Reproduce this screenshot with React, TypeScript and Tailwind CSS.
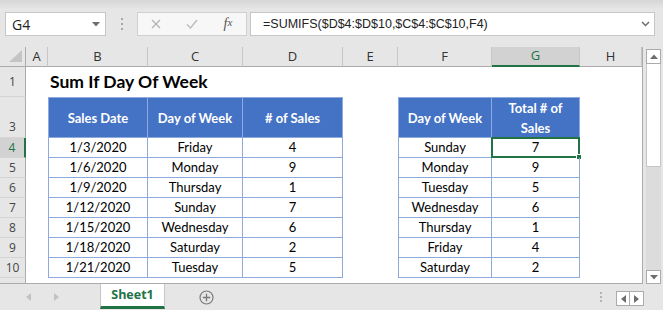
import clsx from "clsx";
import type { ReactNode } from "react";

const W = {
  A: "w-[22px]",
  B: "w-[100px]",
  C: "w-[95px]",
  D: "w-[100px]",
  E: "w-[55px]",
  F: "w-[94px]",
  G: "w-[88px]",
  H: "w-[62px]",
};

const sales = [
  ["1/3/2020", "Friday", "4"],
  ["1/6/2020", "Monday", "9"],
  ["1/9/2020", "Thursday", "1"],
  ["1/12/2020", "Sunday", "7"],
  ["1/15/2020", "Wednesday", "6"],
  ["1/18/2020", "Saturday", "2"],
  ["1/21/2020", "Tuesday", "5"],
];

const totals = [
  ["Sunday", "7"],
  ["Monday", "9"],
  ["Tuesday", "5"],
  ["Wednesday", "6"],
  ["Thursday", "1"],
  ["Friday", "4"],
  ["Saturday", "2"],
];

function RowHead({ n, active, bottom }: { n?: string; active?: boolean; bottom?: boolean }) {
  return (
    <div
      className={clsx(
        "w-[26px] shrink-0 flex justify-center border-b border-b-[#d4d4d4] text-[12px] font-['Open_Sans',sans-serif]",
        bottom ? "items-end pb-[1px]" : "items-center",
        active
          ? "bg-[#d2d2d2] text-[#217346] border-r-2 border-r-[#217346]"
          : "bg-[#e6e6e6] text-[#444] border-r border-r-[#ababab]"
      )}
    >
      {n}
    </div>
  );
}

function Cell({
  w,
  first,
  head,
  selected,
  children,
}: {
  w: string;
  first?: boolean;
  head?: boolean;
  selected?: boolean;
  children?: ReactNode;
}) {
  return (
    <div
      className={clsx(
        w,
        "shrink-0 relative flex items-center justify-center text-center border-r border-b border-[#8ea9db]",
        first && "border-l",
        head ? "border-t bg-[#4472c4] text-white font-bold leading-[20px] px-2" : "text-black"
      )}
    >
      {children}
      {selected && (
        <div className="absolute -left-[1px] -top-[1px] -right-[1px] -bottom-[1px] border-2 border-[#217346]">
          <div className="absolute -right-[4px] -bottom-[4px] w-[6px] h-[6px] bg-[#217346] border border-white" />
        </div>
      )}
    </div>
  );
}

function Blank({ w }: { w: string }) {
  return <div className={clsx(w, "shrink-0")} />;
}

function ColHead({ w, label, active }: { w: string; label: string; active?: boolean }) {
  return (
    <div
      className={clsx(
        w,
        "shrink-0 flex items-center justify-center border-r border-r-[#c6c6c6] text-[13px] font-['Open_Sans',sans-serif]",
        active
          ? "bg-[#d2d2d2] text-[#217346] border-b-2 border-b-[#217346]"
          : "bg-[#e6e6e6] text-[#333] border-b border-b-[#ababab]"
      )}
    >
      {label}
    </div>
  );
}

export default function App() {
  return (
    <div className="w-[663px] h-[310px] overflow-hidden flex flex-col bg-[#e6e6e6] font-['Lato',sans-serif]">
      {/* formula bar */}
      <div className="h-[47px] shrink-0 flex items-start pt-[12px] pl-[5px] bg-[linear-gradient(to_bottom,#d6d6d6,#e6e6e6_9px)]">
        <div className="w-[101px] h-[24px] bg-white border border-[#c6c6c6] flex items-center justify-between pl-[6px] pr-[5px] text-[14px] text-[#222] font-['Open_Sans',sans-serif]">
          <span>G4</span>
          <svg width="8" height="5" viewBox="0 0 8 5">
            <path d="M0 0h8L4 4.5z" fill="#6e6e6e" />
          </svg>
        </div>
        <div className="w-[31px] h-[24px] flex flex-col items-center justify-center gap-[3px]">
          <span className="w-[2px] h-[2px] bg-[#a8a8a8]" />
          <span className="w-[2px] h-[2px] bg-[#a8a8a8]" />
          <span className="w-[2px] h-[2px] bg-[#a8a8a8]" />
        </div>
        <div className="w-[110px] h-[24px] bg-[#f7f7f7] border border-[#d0d0d0] flex items-center">
          <span className="w-[36px] flex justify-center">
            <svg width="10" height="10" viewBox="0 0 10 10">
              <path d="M1 1l8 8M9 1l-8 8" stroke="#b4b4b4" strokeWidth="1.3" />
            </svg>
          </span>
          <span className="w-[36px] flex justify-center">
            <svg width="12" height="10" viewBox="0 0 12 10">
              <path d="M1 5.5l3.5 3.5L11 1" stroke="#bdbdbd" strokeWidth="1.4" fill="none" />
            </svg>
          </span>
          <span className="w-[36px] flex justify-center font-['Liberation_Serif',serif] italic text-[14px] text-[#555] leading-none">
            f<span className="text-[11px]">x</span>
          </span>
        </div>
        <div className="ml-[3px] w-[405px] h-[24px] bg-white border border-[#c6c6c6] flex items-center justify-between pl-[12px] pr-[4px] text-[12.5px] text-[#222] font-['Liberation_Sans',sans-serif]">
          <span>=SUMIFS($D$4:$D$10,$C$4:$C$10,F4)</span>
          <svg width="9" height="6" viewBox="0 0 9 6">
            <path d="M1 1l3.5 3.5L8 1" stroke="#6e6e6e" strokeWidth="1.5" fill="none" />
          </svg>
        </div>
      </div>

      {/* sheet + scrollbar */}
      <div className="h-[237px] shrink-0 flex">
        <div className="w-[643px] shrink-0 bg-white border-r border-b border-[#ababab] overflow-hidden flex flex-col">
          <div className="flex h-[20px] shrink-0">
            <div className="w-[26px] shrink-0 border-r border-r-[#ababab] border-b border-b-[#ababab] bg-[#e6e6e6] flex items-end justify-end pr-[3px] pb-[4px]">
              <svg width="13" height="12" viewBox="0 0 13 12">
                <path d="M13 0V12H0z" fill="#c4c4c4" />
              </svg>
            </div>
            <ColHead w={W.A} label="A" />
            <ColHead w={W.B} label="B" />
            <ColHead w={W.C} label="C" />
            <ColHead w={W.D} label="D" />
            <ColHead w={W.E} label="E" />
            <ColHead w={W.F} label="F" />
            <ColHead w={W.G} label="G" active />
            <ColHead w={W.H} label="H" />
          </div>

          <div className="flex h-[30px] shrink-0">
            <RowHead n="1" />
            <Blank w={W.A} />
            <div className="flex-1 flex items-center pl-[2px] text-[17.5px] font-bold text-black whitespace-nowrap">
              Sum If Day Of Week
            </div>
          </div>

          <div className="flex h-[41px] shrink-0 text-[13px]">
            <RowHead n="3" bottom />
            <Blank w={W.A} />
            <Cell w={W.B} first head>Sales Date</Cell>
            <Cell w={W.C} head>Day of Week</Cell>
            <Cell w={W.D} head># of Sales</Cell>
            <Blank w={W.E} />
            <Cell w={W.F} first head>Day of Week</Cell>
            <Cell w={W.G} head>Total # of Sales</Cell>
            <Blank w={W.H} />
          </div>

          {sales.map((r, i) => (
            <div key={r[0]} className="flex h-[20px] shrink-0 text-[13px]">
              <RowHead n={String(i + 4)} active={i === 0} />
              <Blank w={W.A} />
              <Cell w={W.B} first>{r[0]}</Cell>
              <Cell w={W.C}>{r[1]}</Cell>
              <Cell w={W.D}>{r[2]}</Cell>
              <Blank w={W.E} />
              <Cell w={W.F} first>{totals[i][0]}</Cell>
              <Cell w={W.G} selected={i === 0}>{totals[i][1]}</Cell>
              <Blank w={W.H} />
            </div>
          ))}

          <div className="flex h-[20px] shrink-0">
            <RowHead n="" />
          </div>
        </div>

        {/* vertical scrollbar */}
        <div className="flex-1 flex flex-col pl-[3px] pr-[2px] pt-[2px]">
          <div className="h-[15px] shrink-0 bg-white border border-[#ababab] flex items-center justify-center">
            <svg width="8" height="5" viewBox="0 0 8 5">
              <path d="M0 5h8L4 0.5z" fill="#6e6e6e" />
            </svg>
          </div>
          <div className="flex-1 bg-[#dcdcdc] flex flex-col">
            <div className="h-[103px] bg-white border-x border-b border-[#c6c6c6]" />
          </div>
          <div className="h-[14px] shrink-0 bg-white border border-[#ababab] flex items-center justify-center">
            <svg width="8" height="5" viewBox="0 0 8 5">
              <path d="M0 0h8L4 4.5z" fill="#6e6e6e" />
            </svg>
          </div>
        </div>
      </div>

      {/* sheet tabs */}
      <div className="flex-1 flex items-start">
        <div className="w-[100px] h-[26px] flex items-center">
          <svg className="ml-[26px]" width="5" height="8" viewBox="0 0 5 8">
            <path d="M5 0v8L0 4z" fill="#c2c2c2" />
          </svg>
          <svg className="ml-[23px]" width="5" height="8" viewBox="0 0 5 8">
            <path d="M0 0v8l5-4z" fill="#c2c2c2" />
          </svg>
        </div>
        <div className="w-[65px] h-[25px] bg-white border-x border-[#c6c6c6] border-b-[3px] border-b-[#217346] flex items-center justify-center text-[12.5px] font-bold text-[#217346] font-['Open_Sans',sans-serif]">
          Sheet1
        </div>
        <div className="ml-[34px] h-[26px] flex items-center">
          <svg width="15" height="15" viewBox="0 0 15 15">
            <circle cx="7.5" cy="7.5" r="6.5" stroke="#7a7a7a" strokeWidth="1.2" fill="none" />
            <path d="M7.5 3.8v7.4M3.8 7.5h7.4" stroke="#7a7a7a" strokeWidth="1.3" />
          </svg>
        </div>
        <div className="ml-[386px] h-[26px] flex flex-col items-center justify-center gap-[2px]">
          <span className="w-[2px] h-[2px] bg-[#b4b4b4]" />
          <span className="w-[2px] h-[2px] bg-[#b4b4b4]" />
          <span className="w-[2px] h-[2px] bg-[#b4b4b4]" />
        </div>
        <div className="ml-[14px] mt-[7px] flex">
          <div className="w-[14px] h-[15px] bg-white border border-[#ababab] flex items-center justify-center">
            <svg width="5" height="8" viewBox="0 0 5 8">
              <path d="M5 0v8L0 4z" fill="#6e6e6e" />
            </svg>
          </div>
          <div className="w-[14px] h-[15px] bg-white border border-l-0 border-[#ababab] flex items-center justify-center">
            <svg width="5" height="8" viewBox="0 0 5 8">
              <path d="M0 0v8l5-4z" fill="#6e6e6e" />
            </svg>
          </div>
        </div>
      </div>
    </div>
  );
}
